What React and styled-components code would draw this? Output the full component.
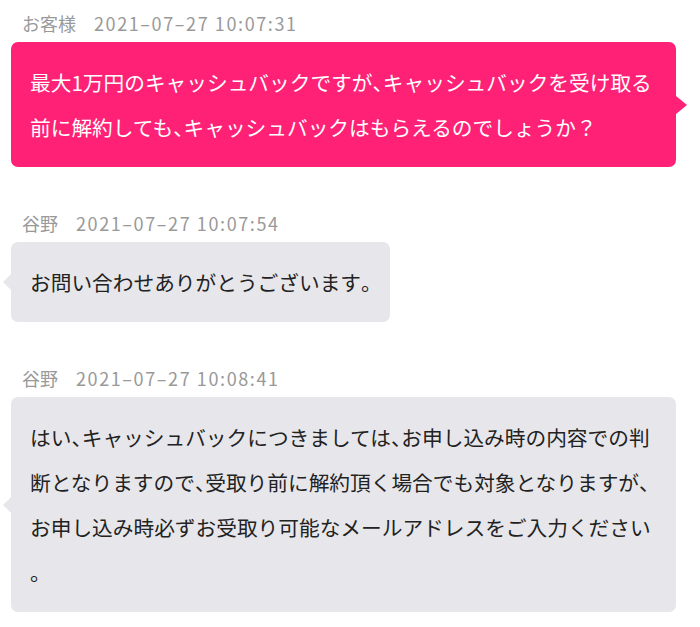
import React from 'react';
import styled, { createGlobalStyle } from 'styled-components';

const GlobalStyle = createGlobalStyle`
  * {
    box-sizing: border-box;
  }

  body {
    margin: 0;
    background: #fff;
    font-family: "Noto Sans CJK JP", "Noto Sans", sans-serif;
  }
`;

const Thread = styled.div`
  display: flex;
  flex-direction: column;
  padding: 11px 24px 0 11px;
`;

const Message = styled.div`
  display: flex;
  flex-direction: column;
  margin-bottom: 44px;
`;

const Meta = styled.div`
  display: flex;
  padding-left: 11px;
  margin-bottom: 7px;
  font-size: 18px;
  line-height: 24px;
  color: #999;
`;

const Name = styled.span`
  margin-right: 18px;
`;

const Time = styled.span`
  letter-spacing: 1.6px;
`;

const Bubble = styled.div`
  position: relative;
  width: fit-content;
  max-width: 100%;
  padding: 17.5px 19px;
  border-radius: 7px;
  font-size: 20.7px;
  line-height: 45px;
  line-break: anywhere;
  background: ${(p) => (p.$mine ? '#ff2176' : '#e7e7eb')};
  color: ${(p) => (p.$mine ? '#fff' : '#222')};

  &::after {
    content: '';
    position: absolute;
    top: 50%;
    transform: translateY(-50%);
    border-top: ${(p) => (p.$mine ? 9 : 8)}px solid transparent;
    border-bottom: ${(p) => (p.$mine ? 9 : 8)}px solid transparent;
    ${(p) =>
      p.$mine
        ? 'right: -11px; border-left: 11px solid #ff2176;'
        : 'left: -8px; border-right: 8px solid #e7e7eb;'}
  }
`;

// punctuation is set half-width, as in the original rendering
const Punct = styled.span`
  font-feature-settings: "halt";
`;

const withPunct = (text) =>
  text.split(/([、。])/).map((part, i) =>
    part === '、' || part === '。' ? <Punct key={i}>{part}</Punct> : part
  );

const messages = [
  {
    name: 'お客様',
    time: '2021–07–27 10:07:31',
    mine: true,
    text: '最大1万円のキャッシュバックですが、キャッシュバックを受け取る前に解約しても、キャッシュバックはもらえるのでしょうか？',
  },
  {
    name: '谷野',
    time: '2021–07–27 10:07:54',
    text: 'お問い合わせありがとうございます。',
  },
  {
    name: '谷野',
    time: '2021–07–27 10:08:41',
    text: 'はい、キャッシュバックにつきましては、お申し込み時の内容での判断となりますので、受取り前に解約頂く場合でも対象となりますが、お申し込み時必ずお受取り可能なメールアドレスをご入力ください。',
  },
];

export default function App() {
  return (
    <>
      <GlobalStyle />
      <Thread>
        {messages.map((m, i) => (
          <Message key={i}>
            <Meta>
              <Name>{m.name}</Name>
              <Time>{m.time}</Time>
            </Meta>
            <Bubble $mine={m.mine}>{withPunct(m.text)}</Bubble>
          </Message>
        ))}
      </Thread>
    </>
  );
}
